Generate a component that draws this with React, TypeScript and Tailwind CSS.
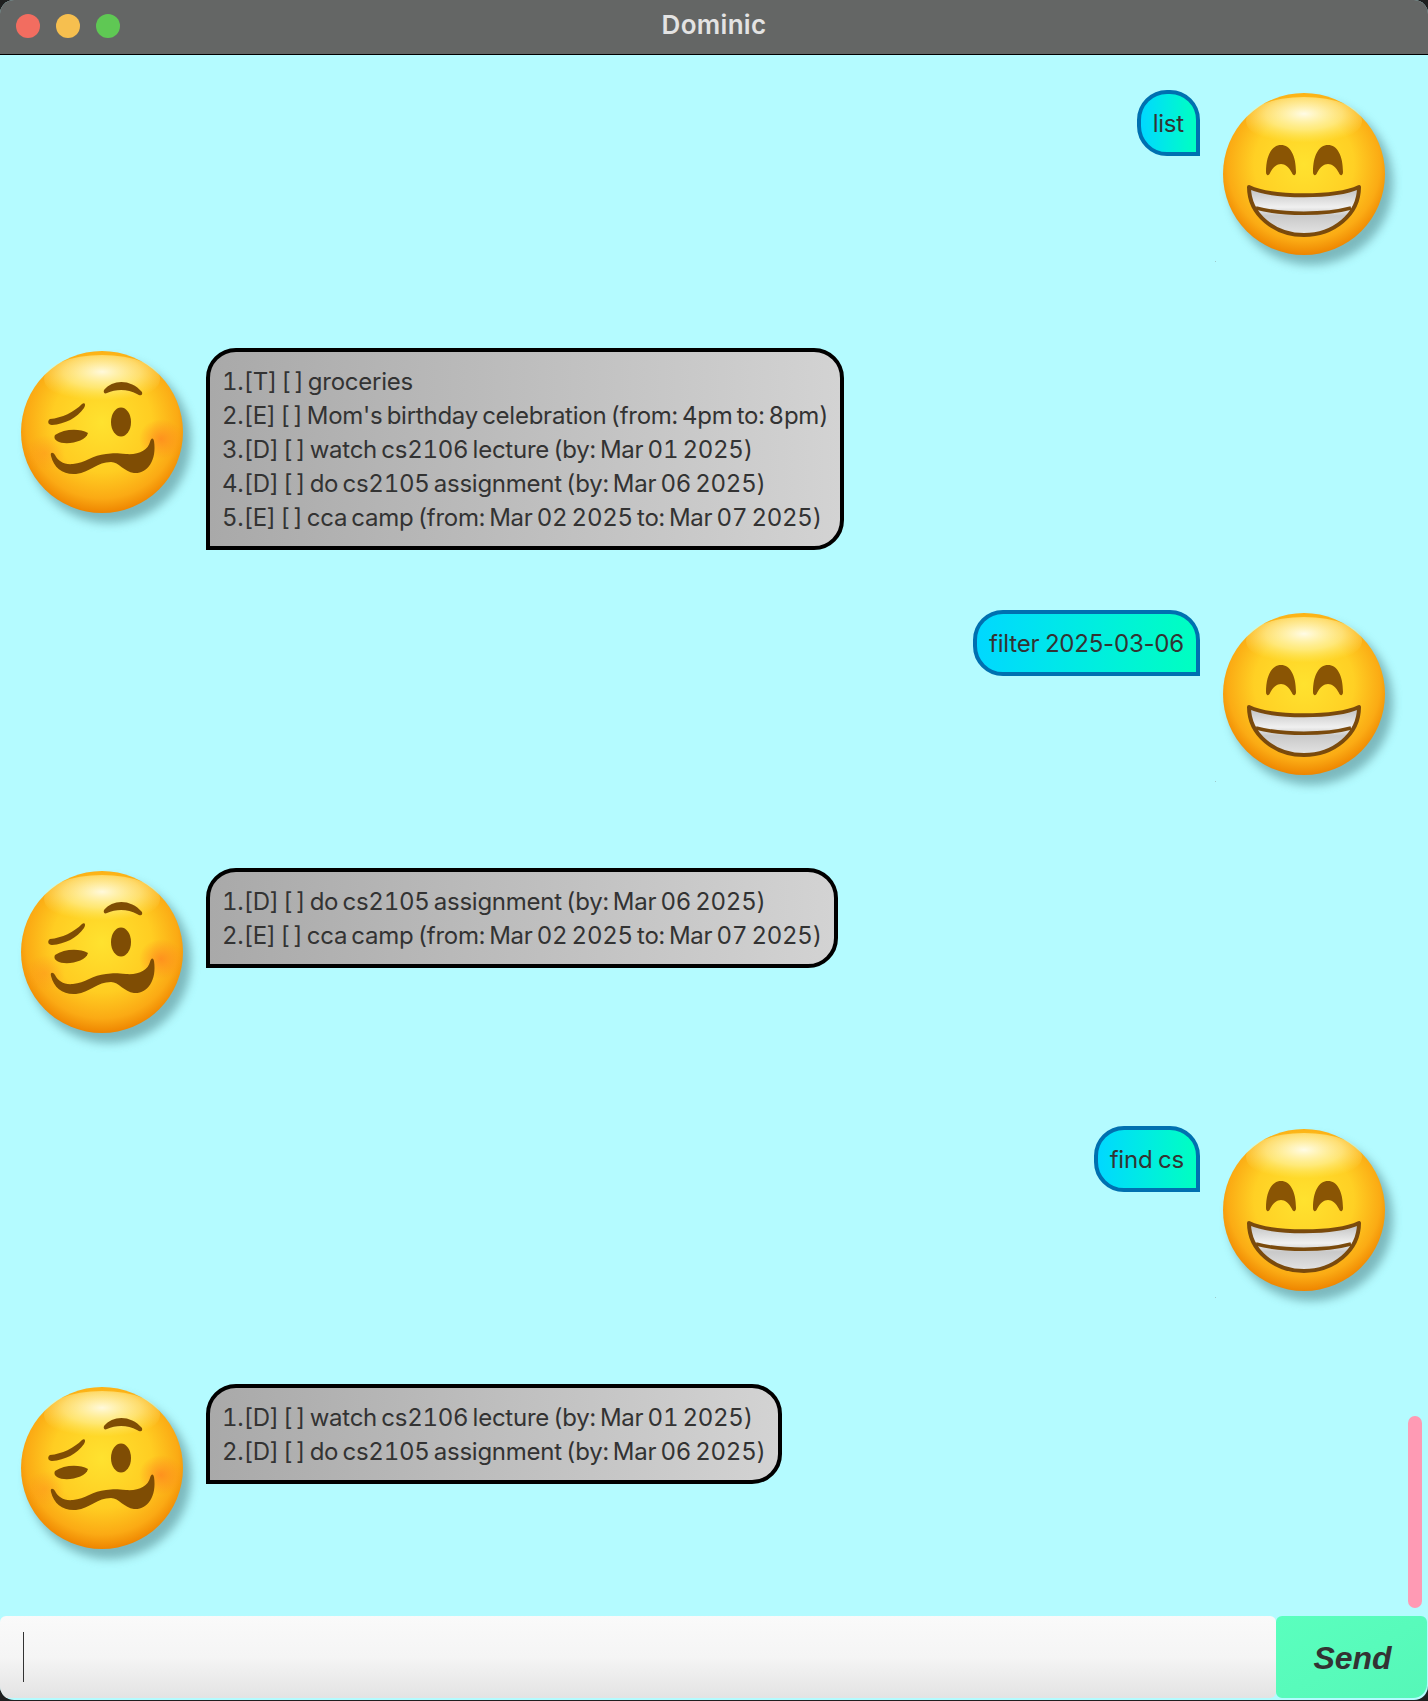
const userFont = "[font-family:Inter,'Liberation_Sans',sans-serif]";

function GrinFace() {
  return (
    <svg width="180" height="180" viewBox="0 0 180 180" className="block overflow-visible">
      <defs>
        <radialGradient id="grinFace" cx="50%" cy="44%" r="56%">
          <stop offset="0%" stopColor="#ffe22f" />
          <stop offset="55%" stopColor="#ffd024" />
          <stop offset="84%" stopColor="#fbab14" />
          <stop offset="100%" stopColor="#ee8500" />
        </radialGradient>
        <radialGradient id="grinShine" cx="50%" cy="35%" r="60%">
          <stop offset="0%" stopColor="#fffef0" stopOpacity="0.95" />
          <stop offset="55%" stopColor="#fff8b0" stopOpacity="0.6" />
          <stop offset="100%" stopColor="#fff37a" stopOpacity="0" />
        </radialGradient>
        <linearGradient id="grinTeeth" x1="0" y1="0" x2="0" y2="1">
          <stop offset="0%" stopColor="#bdbdbd" />
          <stop offset="42%" stopColor="#f0f0f0" />
          <stop offset="60%" stopColor="#c9c9c9" />
          <stop offset="100%" stopColor="#e4e4e4" />
        </linearGradient>
        <filter id="faceShadow" x="-20%" y="-20%" width="150%" height="150%">
          <feGaussianBlur stdDeviation="5" />
        </filter>
      </defs>
      <circle cx="88" cy="90" r="82" fill="#4f8388" opacity="0.55" filter="url(#faceShadow)" />
      <circle cx="81" cy="81" r="81" fill="url(#grinFace)" />
      <ellipse cx="81" cy="28" rx="58" ry="24" fill="url(#grinShine)" />
      <path
        d="M43,79 C43,62 49,52 58,52 C67,52 73,62 73,79 C73,83 70,83 69,80 C66,74 62,71 58,71 C54,71 50,74 47,80 C46,83 43,83 43,79 Z"
        fill="#8a5504"
      />
      <path
        d="M90,79 C90,62 96,52 105,52 C114,52 120,62 120,79 C120,83 117,83 116,80 C113,74 109,71 105,71 C101,71 97,74 94,80 C93,83 90,83 90,79 Z"
        fill="#8a5504"
      />
      <path
        d="M26,94 C50,105 112,105 136,94 C136,122 110,142 81,142 C52,142 26,122 26,94 Z"
        fill="url(#grinTeeth)"
        stroke="#7a4a0c"
        strokeWidth="4"
        strokeLinejoin="round"
      />
      <path d="M33,115 C60,122 102,122 128,115" fill="none" stroke="#7a4a0c" strokeWidth="3.5" />
      <rect x="-8" y="168" width="1" height="1" fill="#9fc9cc" />
    </svg>
  );
}

function WoozyFace() {
  return (
    <svg width="180" height="180" viewBox="0 0 180 180" className="block overflow-visible">
      <defs>
        <radialGradient id="woozyFace" cx="50%" cy="44%" r="56%">
          <stop offset="0%" stopColor="#ffe22f" />
          <stop offset="55%" stopColor="#ffcd22" />
          <stop offset="84%" stopColor="#fbaa14" />
          <stop offset="100%" stopColor="#ee8500" />
        </radialGradient>
        <radialGradient id="woozyShine" cx="50%" cy="35%" r="60%">
          <stop offset="0%" stopColor="#fffef0" stopOpacity="0.9" />
          <stop offset="55%" stopColor="#fff8b0" stopOpacity="0.55" />
          <stop offset="100%" stopColor="#fff37a" stopOpacity="0" />
        </radialGradient>
        <radialGradient id="woozyCheek" cx="50%" cy="50%" r="50%">
          <stop offset="0%" stopColor="#ff8a1e" stopOpacity="0.85" />
          <stop offset="100%" stopColor="#ff8a1e" stopOpacity="0" />
        </radialGradient>
        <filter id="woozyShadow" x="-20%" y="-20%" width="150%" height="150%">
          <feGaussianBlur stdDeviation="5" />
        </filter>
      </defs>
      <circle cx="88" cy="90" r="82" fill="#4f8388" opacity="0.55" filter="url(#woozyShadow)" />
      <circle cx="81" cy="81" r="81" fill="url(#woozyFace)" />
      <ellipse cx="81" cy="28" rx="58" ry="24" fill="url(#woozyShine)" />
      <ellipse cx="140" cy="88" rx="22" ry="20" fill="url(#woozyCheek)" />
      <ellipse cx="24" cy="102" rx="20" ry="18" fill="url(#woozyCheek)" opacity="0.45" />
      <path d="M83,39 C92,28 110,28 121,41 C122,45 119,45 116,43 C107,38 95,38 86,42 C84,43 82,42 83,39 Z" fill="#7f4d04" />
      <path d="M29,68 C41,67 53,61 61,53 C64,51 65,54 63,57 C56,67 44,73 31,74 C27,74 26,70 29,68 Z" fill="#7f4d04" />
      <path d="M34,84 C43,78 58,77 67,82 C65,91 44,95 36,90 C33,88 33,86 34,84 Z" fill="#7f4d04" />
      <ellipse cx="100" cy="71" rx="10" ry="14.5" fill="#7f4d04" />
      <path
        d="M30,105 C33,117 42,124 55,123 C70,121 76,111 90,111 C98,111 103,121 113,122 C126,123 136,110 133,90 C132,86 130,87 129,91 C127,99 118,104 105,103 C96,102 92,102 85,103 C72,104 64,112 52,113 C43,114 37,110 34,104 C32,101 29,101 30,105 Z"
        fill="#7f4d04"
      />
    </svg>
  );
}

function UserRow({ text }: { text: string }) {
  return (
    <div className="flex justify-end items-start gap-[23px] pr-[25px] pb-[60px]">
      <div className="border-4 border-[#0070b0] rounded-t-[30px] rounded-bl-[30px] bg-gradient-to-r from-[#00d8ff] to-[#00ffc0] px-3 pt-[13px] pb-[11px] text-[24px] leading-[34px] tracking-[-0.2px] [word-spacing:-1px] text-[#333333]">
        {text}
      </div>
      <div className="h-[198px] pt-[3px]">
        <GrinFace />
      </div>
    </div>
  );
}

function BotRow({ lines }: { lines: string[] }) {
  return (
    <div className="flex items-start gap-[5px] pl-[21px] pb-[60px]">
      <div className="h-[198px] pt-[3px]">
        <WoozyFace />
      </div>
      <div className="border-4 border-black rounded-t-[30px] rounded-br-[30px] bg-gradient-to-r from-[#a9a9a9] to-[#d3d3d3] px-3 pt-[13px] pb-[11px] text-[24px] leading-[34px] tracking-[-0.25px] [word-spacing:-2px] tabular-nums text-[#333333]">
        {lines.map((line) => (
          <div key={line} className="whitespace-pre">{line}</div>
        ))}
      </div>
    </div>
  );
}

export default function App() {
  return (
    <div className={`w-[1428px] h-[1701px] bg-[#1f1f1f] overflow-hidden ${userFont}`}>
      <div className="relative flex flex-col h-[1700px] rounded-[14px] overflow-hidden bg-[#b4fbff]">
        {/* title bar */}
        <div className="grid grid-cols-3 items-center h-[55px] shrink-0 bg-[#646665] border-b border-black">
          <div className="flex items-center gap-4 pl-4 pb-[3px]">
            <span className="w-6 h-6 rounded-full bg-[#f26d60]" />
            <span className="w-6 h-6 rounded-full bg-[#f6bf4f]" />
            <span className="w-6 h-6 rounded-full bg-[#5fc854]" />
          </div>
          <div className="text-center text-[26px] leading-none font-semibold tracking-[0.3px] text-[#e3e3e3] pb-[5px]">Dominic</div>
        </div>

        {/* dialog list */}
        <div className="flex-1 overflow-hidden pt-[35px]">
          <UserRow text="list" />
          <BotRow
            lines={[
              "1.[T] [ ] groceries",
              "2.[E] [ ] Mom's birthday celebration (from: 4pm to: 8pm)",
              "3.[D] [ ] watch cs2106 lecture (by: Mar 01 2025)",
              "4.[D] [ ] do cs2105 assignment (by: Mar 06 2025)",
              "5.[E] [ ] cca camp (from: Mar 02 2025 to: Mar 07 2025)",
            ]}
          />
          <UserRow text="filter 2025-03-06" />
          <BotRow
            lines={[
              "1.[D] [ ] do cs2105 assignment (by: Mar 06 2025)",
              "2.[E] [ ] cca camp (from: Mar 02 2025 to: Mar 07 2025)",
            ]}
          />
          <UserRow text="find cs" />
          <BotRow
            lines={[
              "1.[D] [ ] watch cs2106 lecture (by: Mar 01 2025)",
              "2.[D] [ ] do cs2105 assignment (by: Mar 06 2025)",
            ]}
          />
        </div>

        {/* scroll thumb */}
        <div className="absolute left-[1408px] top-[1416px] w-[14px] h-[192px] rounded-full bg-[#ff9ab4]" />

        {/* input row */}
        <div className="flex h-[82px] shrink-0 mb-[2px]">
          <div className="flex-1 flex items-center pl-[23px] rounded-[6px] bg-gradient-to-b from-[#fafafa] via-[#f5f5f5] to-[#e3e3e3]">
            <span className="w-px h-[50px] bg-[#333333]" />
          </div>
          <button className="w-[151px] mr-px pt-[2px] pl-[2px] rounded-[6px] rounded-br-[14px] bg-gradient-to-br from-[#5affbe] to-[#56f7b8] text-[32px] font-bold italic text-[#333333] [font-family:'Liberation_Sans',Arial,sans-serif]">
            Send
          </button>
        </div>
      </div>
    </div>
  );
}
